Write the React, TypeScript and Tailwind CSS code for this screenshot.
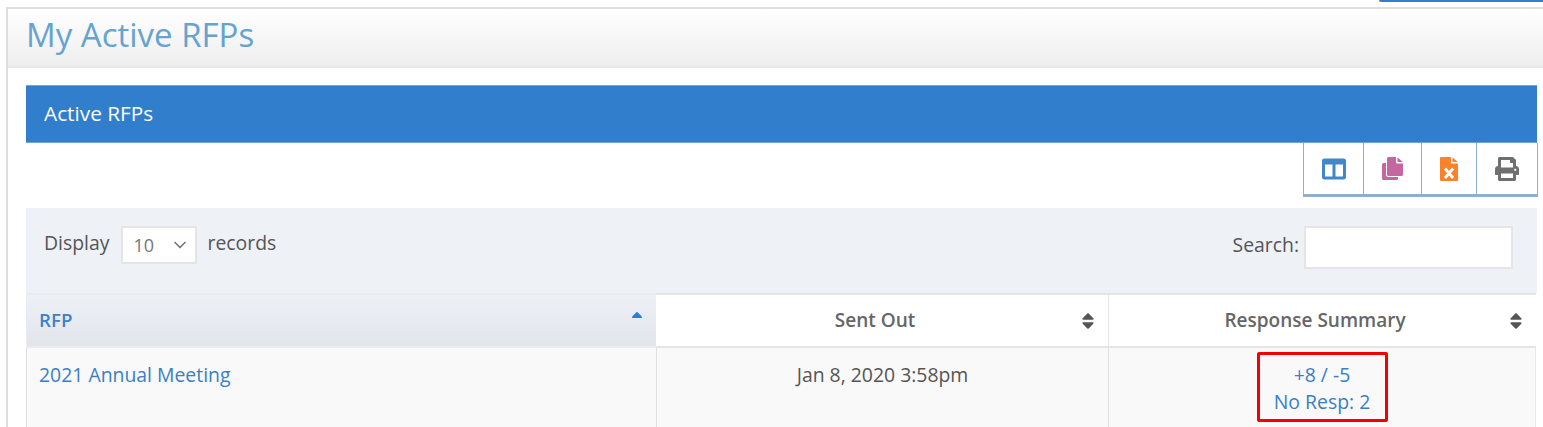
import { ChevronDown } from "lucide-react"
import { FaColumns, FaPrint, FaSort, FaSortUp } from "react-icons/fa"

// two overlapping pages, the back one peeks out bottom left
function CopyIcon() {
  return (
    <svg width="21" height="23" viewBox="0 0 21 23" className="text-[#c4669f]">
      <path d="M1.5 6H4v11.5A2.5 2.5 0 0 0 6.500 20H16v1.500a1.500 1.500 0 0 1-1.500 1.500h-13A1.500 1.500 0 0 1 0 21.500v-14A1.500 1.500 0 0 1 1.500 6z" fill="currentColor" />
      <path d="M6.500 0H14v5.500a1 1 0 0 0 1 1h6v11A1.500 1.500 0 0 1 19.500 19h-13A1.500 1.500 0 0 1 5 17.500v-16A1.500 1.500 0 0 1 6.500 0z" fill="currentColor" />
      <path d="M15.500 0.300 20.700 5H15.500z" fill="currentColor" />
    </svg>
  )
}

function ExcelIcon() {
  return (
    <svg width="18" height="24" viewBox="0 0 18 24" className="text-[#f9822b]">
      <path d="M1 0h10v6.500h7V23a1 1 0 0 1-1 1H1a1 1 0 0 1-1-1V1a1 1 0 0 1 1-1z" fill="currentColor" />
      <path d="M12.500 0.300 17.700 5h-5.200z" fill="currentColor" />
      <path d="M5 11.500l8 9.500M13 11.500l-8 9.500" stroke="#fff" strokeWidth="2.800" fill="none" />
    </svg>
  )
}

export default function App() {
  return (
    <div className="h-[427px] overflow-hidden bg-white font-['Open_Sans',sans-serif] text-[19.4px] text-[#555]">
      {/* bit of the nav that pokes in at the top */}
      <div className="flex h-[7px] justify-end">
        <div className="h-[2px] w-[164px] rounded-bl-[3px] bg-[#337fcf]" />
      </div>

      <div className="ml-[6px] border-t-2 border-l-2 border-[#dfdfdf]">
        <div className="flex h-[59px] items-center border-b-2 border-[#e8e8e8] bg-gradient-to-b from-white to-[#eeeeee] pl-[18px]">
          <h1 className="mb-[6px] text-[33px] leading-[50px] text-[#66a3cf]">My Active RFPs</h1>
        </div>

        <div className="pt-[17px] pr-[6px] pl-[18px]">
          <div className="flex h-[58px] items-center border-y border-[#6ea5dc] bg-[#317ecd] pl-[18px] text-[20.8px] text-white">
            Active RFPs
          </div>

          {/* export buttons */}
          <div className="flex justify-end">
            <div className="-mr-px flex h-[54px] border-b-[3px] border-l border-[#8fb0cc]">
              <div className="flex w-[60px] items-center justify-center border-r border-[#8fb0cc]">
                <FaColumns className="text-[24px] text-[#4188c9]" />
              </div>
              <div className="flex w-[58px] items-center justify-center border-r border-[#8fb0cc]">
                <CopyIcon />
              </div>
              <div className="flex w-[55px] items-center justify-center border-r border-[#8fb0cc]">
                <ExcelIcon />
              </div>
              <div className="flex w-[61px] items-center justify-center border-r border-[#8fb0cc]">
                <FaPrint className="text-[24px] text-[#6f6f6f]" />
              </div>
            </div>
          </div>

          {/* filter row */}
          <div className="mt-[11px] flex h-[85px] items-start justify-between bg-[#eef1f6] pr-[24px] pl-[18px]">
            <div className="mt-[18px] flex items-center">
              <span className="mb-[5px]">Display</span>
              <div className="ml-[12px] flex h-[38px] w-[76px] items-center justify-between border-2 border-[#e5e5e5] bg-white pr-[5px] pl-[10px] text-[18px] text-[#777]">
                10
                <ChevronDown className="h-[20px] w-[20px]" strokeWidth={2} />
              </div>
              <span className="mb-[5px] ml-[10px]">records</span>
            </div>
            <div className="mt-[18px] flex items-center">
              <span className="mb-[6px]">Search:</span>
              <input className="ml-[5px] h-[43px] w-[209px] border-2 border-[#e5e5e5] bg-white" />
            </div>
          </div>

          {/* table */}
          <div className="grid grid-cols-[630px_453px_427px]">
            <div className="flex h-[55px] items-center justify-between border-t-2 border-b-2 border-l border-[#e9ebee] bg-gradient-to-b from-[#edf0f5] to-[#e2e5ec] pr-[10px] pl-[12px] text-[#3f80c8]">
              <span className="text-[18.7px] font-semibold">RFP</span>
              <FaSortUp className="mb-[4px] text-[18px] text-[#317ecd]" />
            </div>
            <div className="flex h-[55px] items-center border-t-2 border-r border-b-2 border-[#e5e5e5] bg-white pr-[10px] pl-[12px] font-semibold text-[#666]">
              <span className="flex-1 pl-[4px] text-center text-[19px]">Sent Out</span>
              <FaSort className="text-[20px] text-[#555]" />
            </div>
            <div className="flex h-[55px] items-center border-t-2 border-b-2 border-[#e5e5e5] bg-white pr-[10px] pl-[12px] font-semibold text-[#666]">
              <span className="flex-1 pl-[3px] text-center text-[19px]">Response Summary</span>
              <FaSort className="text-[20px] text-[#555]" />
            </div>

            <div className="h-[80px] border-l border-[#e0e0e0] bg-[#f9f9f9] pt-[12px] pl-[12px] text-[#3a7fc4]">
              2021 Annual Meeting
            </div>
            <div className="h-[80px] border-x border-[#e0e0e0] bg-[#f9f9f9] pt-[12px] text-center">
              Jan 8, 2020 3:58pm
            </div>
            <div className="h-[80px] border-r border-[#e8e8e8] bg-[#f9f9f9] pt-[4px] text-center text-[#3a7fc4]">
              <div className="inline-block h-[70px] w-[131px] rounded-[2px] border-[3px] border-[#f50000] pt-[6px] leading-[27px]">
                +8 / -5
                <br />
                No Resp: 2
              </div>
            </div>
          </div>
        </div>
      </div>
    </div>
  )
}
